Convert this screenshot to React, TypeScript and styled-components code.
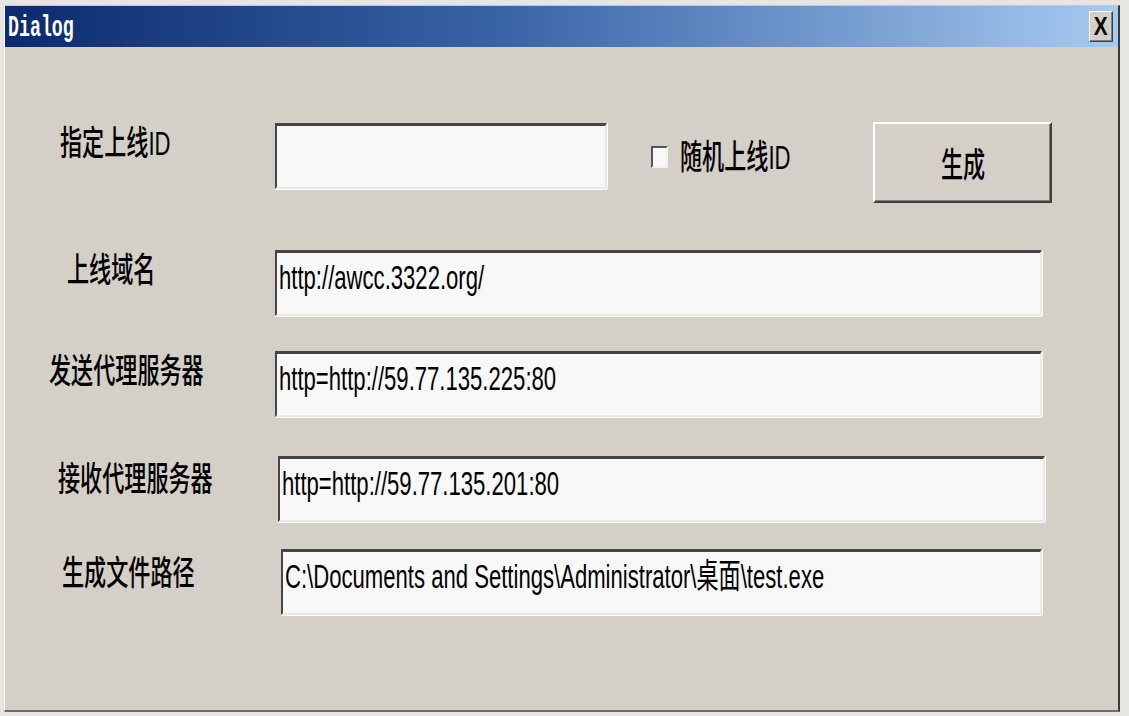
import styled, { createGlobalStyle } from "styled-components";

const GlobalStyle = createGlobalStyle`
  html, body {
    margin: 0;
    padding: 0;
    overflow: hidden;
    background: #e7e5e0;
  }
`;

const TEXT_FONT = `"Liberation Sans", "Noto Sans CJK SC", Arial, sans-serif`;

// styled-components

const Page = styled.div`
  width: 1129px;
  height: 716px;
  background: #e7e5e0;
  display: flex;
  align-items: flex-start;
`;

const Frame = styled.div`
  margin: 5px 0 0 4px;
  width: 1116px;
  height: 707px;
  box-sizing: border-box;
  border-top: 1px solid #c9c6bf;
  border-left: 1px solid #ffffff;
  border-right: 2px solid #3a3a3a;
  border-bottom: 2px solid #6e6e6e;
  background: #d4d0c8;
  display: flex;
  flex-direction: column;
`;

const TitleBar = styled.div`
  height: 41px;
  flex-shrink: 0;
  background: linear-gradient(to right, #0c2a6e 0%, #3a64a8 45%, #a6caf0 100%);
  display: flex;
  align-items: center;
  justify-content: space-between;
  padding: 0 3px 0 3px;
`;

const Squeeze = styled.span<{ $sx: number; $origin?: string }>`
  display: inline-block;
  white-space: nowrap;
  transform: scaleX(${(p) => p.$sx});
  transform-origin: ${(p) => p.$origin ?? "left center"};
`;

const TitleText = styled.div`
  font-family: "Liberation Mono", "Courier New", monospace;
  font-weight: bold;
  font-size: 29px;
  color: #ffffff;
  line-height: 41px;
  margin-top: 3px;
`;

const CloseButton = styled.div`
  width: 24px;
  height: 31px;
  box-sizing: border-box;
  background: #d4d0c8;
  border: 1px solid;
  border-color: #ffffff #404040 #404040 #ffffff;
  box-shadow: inset -1px -1px 0 #808080;
  display: flex;
  align-items: center;
  justify-content: center;
  font-family: ${TEXT_FONT};
  font-weight: bold;
  font-size: 26px;
  color: #000;
  margin: 0 2px 0 0;
`;

const Client = styled.div`
  flex: 1;
  display: flex;
  flex-direction: column;
`;

const Row = styled.div<{ $top: number }>`
  display: flex;
  align-items: flex-start;
  margin-top: ${(p) => p.$top}px;
`;

const Label = styled.div<{ $width: number; $indent: number; $drop: number }>`
  width: ${(p) => p.$width}px;
  padding-left: ${(p) => p.$indent}px;
  margin-top: ${(p) => p.$drop}px;
  box-sizing: border-box;
  flex-shrink: 0;
  font-family: ${TEXT_FONT};
  font-weight: 500;
  font-size: 34px;
  line-height: 40px;
  color: #000;
`;

const Field = styled.div<{ $width: number; $drop?: number }>`
  width: ${(p) => p.$width}px;
  height: 66px;
  margin-top: ${(p) => p.$drop ?? 0}px;
  box-sizing: border-box;
  flex-shrink: 0;
  background: #f8f8f8;
  border-style: solid;
  border-width: 3px 2px 2px 2px;
  border-color: #454545 #ebe9e4 #ebe9e4 #454545;
  box-shadow: 0 1px 0 #ffffff, 1px 0 0 #ffffff;
  padding: 4px 0 0 2px;
  font-family: ${TEXT_FONT};
  font-size: 34px;
  line-height: 40px;
  color: #000;
  overflow: hidden;
`;

const CheckGroup = styled.div`
  width: 222px;
  margin: 15px 0 0 44px;
  height: 40px;
  display: flex;
  align-items: center;
  flex-shrink: 0;
`;

const CheckBox = styled.div`
  width: 17px;
  height: 22px;
  box-sizing: border-box;
  background: #f8f8f8;
  border: 2px solid;
  border-color: #555555 #f2f0ec #f2f0ec #555555;
  flex-shrink: 0;
  margin-right: 12px;
`;

const CheckText = styled.div`
  font-family: ${TEXT_FONT};
  font-weight: 500;
  font-size: 34px;
  line-height: 40px;
  color: #000;
`;

const Button = styled.div`
  width: 179px;
  height: 81px;
  box-sizing: border-box;
  background: #d4d0c8;
  border: 2px solid;
  border-color: #ffffff #404040 #404040 #ffffff;
  box-shadow: inset -1px -1px 0 #808080;
  display: flex;
  align-items: center;
  justify-content: center;
  font-family: ${TEXT_FONT};
  font-weight: 500;
  font-size: 34px;
  color: #000;
  flex-shrink: 0;
`;

const SX = 0.65;

interface IFieldRow {
  label: string;
  value: string;
  top: number;
  labelWidth: number;
  indent: number;
  drop: number;
  width: number;
}

const rows: IFieldRow[] = [
  { label: "上线域名", value: "http://awcc.3322.org/", top: 47, labelWidth: 270, indent: 62, drop: 0, width: 767 },
  { label: "发送代理服务器", value: "http=http://59.77.135.225:80", top: 35, labelWidth: 270, indent: 44, drop: 0, width: 767 },
  { label: "接收代理服务器", value: "http=http://59.77.135.201:80", top: 39, labelWidth: 273, indent: 53, drop: 3, width: 767 },
  { label: "生成文件路径", value: "C:\\Documents and Settings\\Administrator\\桌面\\test.exe", top: 27, labelWidth: 276, indent: 57, drop: 4, width: 761 },
];

export default function App() {
  return (
    <Page>
      <GlobalStyle />
      <Frame>
        <TitleBar>
          <TitleText>
            <Squeeze $sx={0.63}>Dialog</Squeeze>
          </TitleText>
          <CloseButton>
            <Squeeze $sx={0.8} $origin="center">X</Squeeze>
          </CloseButton>
        </TitleBar>
        <Client>
          <Row $top={75}>
            <Label $width={270} $indent={55} $drop={1}>
              <Squeeze $sx={SX}>指定上线ID</Squeeze>
            </Label>
            <Field $width={332} $drop={1} />
            <CheckGroup>
              <CheckBox />
              <CheckText>
                <Squeeze $sx={SX}>随机上线ID</Squeeze>
              </CheckText>
            </CheckGroup>
            <Button>
              <Squeeze $sx={SX} $origin="center">生成</Squeeze>
            </Button>
          </Row>
          {rows.map((row) => (
            <Row key={row.label} $top={row.top}>
              <Label $width={row.labelWidth} $indent={row.indent} $drop={row.drop}>
                <Squeeze $sx={SX}>{row.label}</Squeeze>
              </Label>
              <Field $width={row.width}>
                <Squeeze $sx={SX}>{row.value}</Squeeze>
              </Field>
            </Row>
          ))}
        </Client>
      </Frame>
    </Page>
  );
}
